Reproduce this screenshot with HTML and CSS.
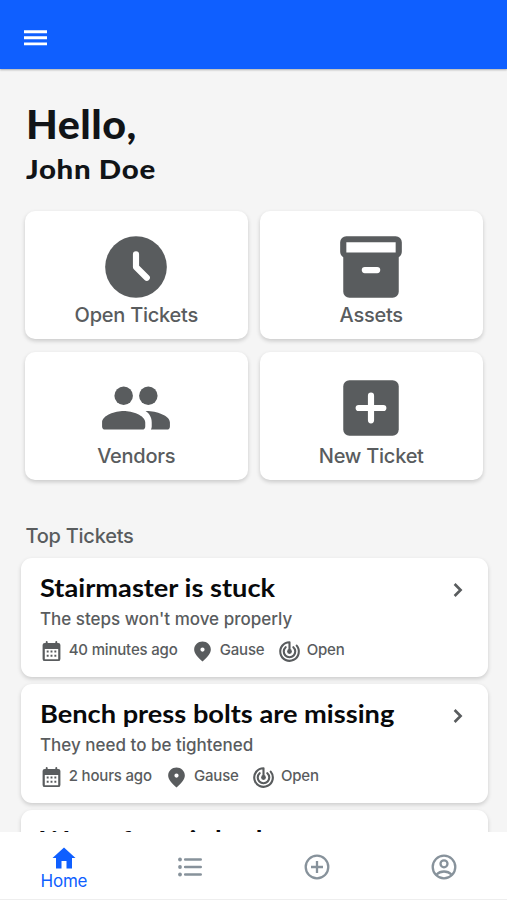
FILE: index.html
```html
<!DOCTYPE html>
<html lang="en">
<head>
<meta charset="utf-8">
<meta name="viewport" content="width=device-width, initial-scale=1">
<title>Tickets</title>
<link rel="stylesheet" href="styles.css">
</head>
<body>
<svg class="defs" width="0" height="0">
  <symbol id="calendar" viewBox="0 0 24 24">
    <path fill-rule="evenodd" d="M19 3h-1V2a1 1 0 0 0-2 0v1H8V2a1 1 0 0 0-2 0v1H5a2.300 2.300 0 0 0-2.300 2.300V19.700A2.300 2.300 0 0 0 5 22h14a2.300 2.300 0 0 0 2.300-2.300V5.300A2.300 2.300 0 0 0 19 3ZM5 9.500h14V20H5Z"/>
    <path d="M7 11h2v2H7zM11 11h2v2h-2zM15 11h2v2h-2zM7 15.500h2v2H7zM11 15.500h2v2h-2zM15 15.500h2v2h-2z"/>
  </symbol>
  <symbol id="pin" viewBox="0 0 24 24">
    <path fill-rule="evenodd" d="M12 1.500C7.400 1.500 3.300 5 3.300 9.900 3.300 14.200 7.200 18 12 22.500 16.800 18 20.700 14.200 20.700 9.900 20.700 5 16.600 1.500 12 1.500ZM12 7.800a2.200 2.200 0 1 1 0 4.400 2.200 2.200 0 0 1 0-4.400Z"/>
  </symbol>
  <symbol id="radar" viewBox="0 0 24 24">
    <path fill="none" stroke="currentColor" stroke-width="2.200" stroke-linecap="round" stroke-linejoin="round" d="M12 12V2.300a9.700 9.700 0 1 0 7.500 3.500M8 7.500a6 6 0 1 0 8 0"/>
    <circle cx="12" cy="12" r="2.500"/>
  </symbol>
  <symbol id="chevron" viewBox="0 0 24 24">
    <path fill="none" stroke="currentColor" stroke-width="2.900" d="m8.300 5.500 6.500 6.500-6.500 6.500"/>
  </symbol>
</svg>
<header class="topbar">
  <svg class="menu" viewBox="0 0 24 18"><path d="M0 1h24v3H0zM0 7.300h24v3H0zM0 13.600h24v3H0z"/></svg>
</header>
<main class="content">
  <h1 class="hello">Hello,</h1>
  <h2 class="name">John Doe</h2>
  <section class="tiles">
    <a class="tile">
      <svg class="tile-icon" viewBox="0 0 24 24"><circle cx="12" cy="12" r="10"/><path class="cut" d="M12 7.900V12l3.500 3.500"/></svg>
      <span>Open Tickets</span>
    </a>
    <a class="tile">
      <svg class="tile-icon" viewBox="0 0 24 24"><path fill-rule="evenodd" d="M4 2h16a2 2 0 0 1 2 2v3c0 .8-.4 1.500-1 1.800V20a2 2 0 0 1-2 2H5a2 2 0 0 1-2-2V8.800C2.400 8.500 2 7.800 2 7V4a2 2 0 0 1 2-2Zm0 2v3.300h16V4Z"/><path class="cut" d="M10 13h4"/></svg>
      <span>Assets</span>
    </a>
    <a class="tile">
      <svg class="tile-icon" viewBox="0 0 24 24"><circle cx="8" cy="8" r="3"/><circle cx="16" cy="8" r="3"/><path d="M8 13c-2.700 0-7 1.400-7 3.700V18a1 1 0 0 0 1 1h12a1 1 0 0 0 1-1v-1.300C15 14.400 10.700 13 8 13ZM15.100 13c1.200.8 2 2 2 3.700V18c0 .4-.1.700-.3 1H22a1 1 0 0 0 1-1v-1.300C23 14.400 18.300 12.900 15.100 13Z"/></svg>
      <span>Vendors</span>
    </a>
    <a class="tile">
      <svg class="tile-icon" viewBox="0 0 24 24"><rect x="3" y="3" width="18" height="18" rx="2"/><path class="cut" d="M12 8v8M8 12h8"/></svg>
      <span>New Ticket</span>
    </a>
  </section>
  <h3 class="section-title">Top Tickets</h3>
  <section class="list">
    <article class="ticket">
      <div class="ticket-head"><h4>Stairmaster is stuck</h4><svg class="chev"><use href="#chevron"/></svg></div>
      <p class="desc">The steps won't move properly</p>
      <div class="meta">
        <span class="item"><svg><use href="#calendar"/></svg>40 minutes ago</span>
        <span class="item"><svg><use href="#pin"/></svg>Gause</span>
        <span class="item"><svg><use href="#radar"/></svg>Open</span>
      </div>
    </article>
    <article class="ticket">
      <div class="ticket-head"><h4>Bench press bolts are missing</h4><svg class="chev"><use href="#chevron"/></svg></div>
      <p class="desc">They need to be tightened</p>
      <div class="meta">
        <span class="item"><svg><use href="#calendar"/></svg>2 hours ago</span>
        <span class="item"><svg><use href="#pin"/></svg>Gause</span>
        <span class="item"><svg><use href="#radar"/></svg>Open</span>
      </div>
    </article>
    <article class="ticket">
      <div class="ticket-head"><h4>Water foam is broken</h4></div>
    </article>
  </section>
</main>
<nav class="tabs">
  <a class="tab active">
    <svg class="home" viewBox="0 0 24 22"><path d="M12 .5 23.500 11H20v10.500h-5.500v-7.500h-5v7.500H4V11H.5Z"/></svg>
    <span>Home</span>
  </a>
  <a class="tab"><svg class="tab-icon" viewBox="0 0 26 26"><g stroke="currentColor" stroke-width="2.600" stroke-linecap="round"><path d="M8.200 5.500h15.500M8.200 13h15.500M8.200 20.500h15.500"/></g><circle cx="3" cy="5.500" r="1.900"/><circle cx="3" cy="13" r="1.900"/><circle cx="3" cy="20.500" r="1.900"/></svg></a>
  <a class="tab"><svg class="tab-icon line" viewBox="0 0 26 26"><circle cx="13" cy="13" r="11.300"/><path d="M13 7v12M7 13h12"/></svg></a>
  <a class="tab"><svg class="tab-icon line" viewBox="0 0 26 26"><circle cx="13" cy="13" r="11.300"/><circle cx="13" cy="9.800" r="3.500"/><path d="M5.500 20.500c4-4 11-4 15 0"/></svg></a>
</nav>
</body>
</html>
```
FILE: styles.css
```css
* { box-sizing: border-box; }
body {
  margin: 0;
  height: 900px;
  overflow: hidden;
  display: flex;
  flex-direction: column;
  background: #f5f5f5;
  color: #595c5e;
  font-family: Inter, "Liberation Sans", sans-serif;
  font-weight: 500;
}
h1, h2, h3, h4, p { margin: 0; white-space: nowrap; }
svg { fill: currentColor; flex: none; }
.defs { position: absolute; }
.topbar {
  flex: none;
  height: 69px;
  padding: 29px 0 0 24px;
  background: #0f5fff;
  color: #fff;
  box-shadow: 0 1px 2px rgba(0, 0, 0, .3);
}
.menu { display: block; width: 23px; height: 18px; }
.content { flex: 1; min-height: 0; overflow: hidden; padding: 31px 20px 0 20.500px; }
.hello, .name { margin-left: 5.500px; color: #111417; font-family: Lato, sans-serif; font-weight: 900; transform-origin: left; }
.hello { font-size: 40px; line-height: 48px; letter-spacing: .5px; transform: scaleX(1.03); }
.name { font-size: 27px; line-height: 42px; letter-spacing: .6px; transform: scaleX(1.09); }
.tiles {
  display: grid;
  grid-template-columns: 222.500px 222.500px;
  grid-auto-rows: 128px;
  gap: 12.500px;
  margin: 21px 0 0 4.500px;
}
.tile {
  display: flex;
  flex-direction: column;
  align-items: center;
  padding-top: 19px;
  border-radius: 10px;
  background: #fff;
  box-shadow: 0 2px 4px rgba(0, 0, 0, .18);
  font-size: 20px;
  line-height: 24px;
  letter-spacing: -.25px;
}
.tile-icon { width: 74px; height: 74px; margin-bottom: -1px; }
.cut { fill: none; stroke: #fff; stroke-width: 2; stroke-linecap: round; stroke-linejoin: round; }
.section-title { margin: 43px 0 0 5px; font-size: 20px; line-height: 26px; font-weight: 500; letter-spacing: -.25px; }
.list { display: flex; flex-direction: column; gap: 6.500px; margin-top: 9px; }
.ticket {
  flex: none;
  height: 119.500px;
  width: 467px;
  padding: 13.500px 20px 0 19.500px;
  border-radius: 11px;
  background: #fff;
  box-shadow: 0 2px 4px rgba(0, 0, 0, .17);
}
.ticket-head { display: flex; justify-content: space-between; height: 35.500px; }
.ticket h4 { color: #08090b; font: 700 25px/32px Lato, sans-serif; transform: scaleX(1.088); transform-origin: left; }
.ticket:last-child h4 { margin-top: -.5px; }
.chev { width: 22px; height: 22px; margin: 8px -1px 0 0; }
.desc { font-size: 17px; line-height: 24px; }
.meta { display: flex; gap: 13.500px; margin-top: 7px; font-size: 15px; line-height: 24px; letter-spacing: -.18px; }
.item { display: flex; gap: 5.700px; }
.item svg { width: 23px; height: 23px; margin-top: 2px; }
.tabs {
  flex: none;
  position: relative;
  display: grid;
  grid-template-columns: repeat(4, 1fr);
  height: 68px;
  background: #fff;
  border-bottom: 1px solid #eee;
  color: #87929b;
}
.tab { display: flex; flex-direction: column; align-items: center; justify-content: center; }
.active { color: #0f5fff; font-size: 17px; line-height: 20px; font-weight: 400; letter-spacing: -.2px; justify-content: flex-start; padding: 15px 0 0 1px; }
.home { width: 24px; height: 22px; margin-bottom: 2px; }
.tab-icon { width: 26px; height: 26px; margin-top: 3px; }
.line { fill: none; stroke: currentColor; stroke-width: 2.300; }
```
